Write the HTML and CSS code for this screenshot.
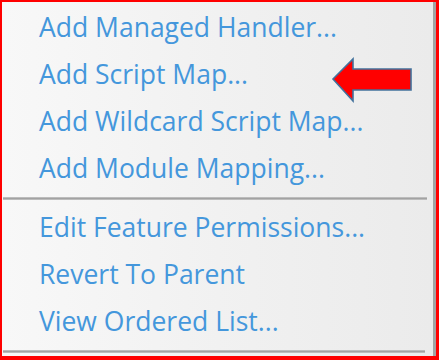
FILE: index.html
```html
<!DOCTYPE html>
<html>
<head>
<meta charset="utf-8">
<link rel="stylesheet" href="styles.css">
</head>
<body>
<div class="frame">
  <div class="menu">
    <ul class="group">
      <li class="item">Add Managed Handler...</li>
      <li class="item">Add Script Map...</li>
      <li class="item">Add Wildcard Script Map...</li>
      <li class="item">Add Module Mapping...</li>
    </ul>
    <div class="sep"></div>
    <ul class="group">
      <li class="item">Edit Feature Permissions...</li>
      <li class="item">Revert To Parent</li>
      <li class="item">View Ordered List...</li>
    </ul>
    <div class="sep sep-bottom"></div>
  </div>
  <svg class="arrow" width="84" height="48" viewBox="0 0 84 48">
    <polygon points="2,22 22,2 22,12 80,12 80,33 22,33 22,44" fill="#ff0000" stroke="#41719c" stroke-width="1.6" stroke-linejoin="miter"/>
  </svg>
</div>
</body>
</html>
```

FILE: styles.css
```css
html, body {
  margin: 0;
  padding: 0;
  background: #ffffff;
}

.frame {
  position: relative;
  width: 439px;
  height: 360px;
  box-sizing: border-box;
  border-style: solid;
  border-color: #ff0000;
  border-width: 2px 3px 4px 2px;
  overflow: hidden;
}

.menu {
  height: 100%;
  box-sizing: border-box;
  padding-top: 2px;
  background: linear-gradient(to right, #f8f8f8 0%, #f1f1f1 50%, #ebebeb 100%);
  border-right: 3px solid #a3a3a3;
  font-family: "Open Sans", "Noto Sans", sans-serif;
}

.group {
  list-style: none;
  margin: 0;
  padding: 0;
}

.item {
  height: 47px;
  line-height: 47px;
  padding-left: 37px;
  font-size: 26.5px;
  color: #4497dc;
  white-space: nowrap;
}

.sep {
  height: 3px;
  margin: 5px 6px 4px 1px;
  background: linear-gradient(to bottom, #c9c9c9, #a2a2a2 50%, #c9c9c9);
}

.sep-bottom {
  margin-top: 5px;
  margin-right: 8px;
}

.arrow {
  position: absolute;
  left: 329px;
  top: 55px;
}
```
